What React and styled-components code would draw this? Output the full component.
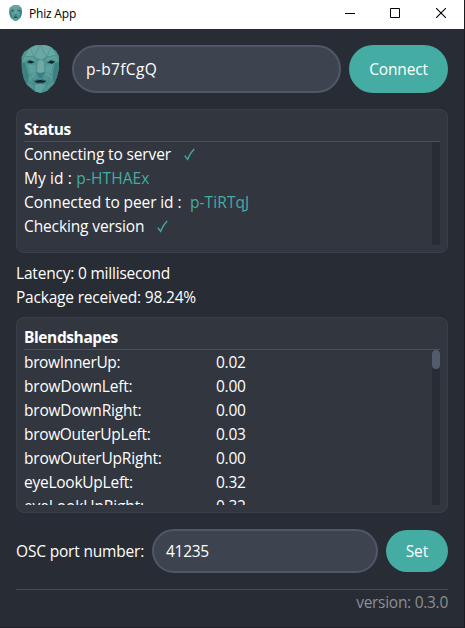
import React from "react";
import styled, { createGlobalStyle } from "styled-components";

const Global = createGlobalStyle`
  *, *::before, *::after { box-sizing: border-box; }
  body {
    margin: 0;
    background: #282c34;
    color: #fff;
    font: 400 15.5px/24px "Open Sans", "Noto Sans", sans-serif;
    overflow: hidden;
  }
`;

const Window = styled.div`
  width: 465px;
  height: 628px;
  display: flex;
  flex-direction: column;
  background: #282c34;
  border-right: 1px solid #1b1c22;
  border-bottom: 1px solid #1e2027;
`;

const TitleBar = styled.header`
  height: 29px;
  flex: none;
  display: flex;
  align-items: center;
  padding: 0 18px 3px 9px;
  background: #fff;
  color: #000;
`;

const AppName = styled.span`
  flex: 1;
  margin-left: 7px;
  font-size: 12px;
  letter-spacing: -0.2px;
  line-height: 16px;
  padding-top: 2px;
`;

const Controls = styled.div`
  display: flex;
  gap: 35px;
  svg { display: block; }
  svg:last-child { margin-left: 1px; }
`;

const Body = styled.main`
  flex: 1;
  display: flex;
  flex-direction: column;
  padding: 16px 16px 0;
`;

const ConnectRow = styled.div`
  display: flex;
  align-items: center;
  gap: 8px;
`;

const LogoBox = styled.div`
  width: 48px;
  height: 48px;
  display: flex;
  justify-content: center;
  svg { display: block; }
`;

const Input = styled.input`
  flex: 1;
  min-width: 0;
  height: ${(p) => p.$height}px;
  padding: 0 12px;
  border: 2px solid #4f586a;
  border-radius: 24px;
  background: #3e444f;
  color: #fff;
  font: inherit;
  letter-spacing: ${(p) => p.$track || 0}px;
  outline: none;
`;

const Button = styled.button`
  width: ${(p) => p.$width}px;
  height: ${(p) => p.$height}px;
  padding: 0;
  border: 0;
  border-radius: 24px;
  background: #44aca2;
  color: #fff;
  font: inherit;
  letter-spacing: ${(p) => p.$track || 0}px;
`;

const Card = styled.section`
  height: ${(p) => p.$height}px;
  display: flex;
  flex-direction: column;
  padding: 7px;
  border: 1px solid #3b3f4a;
  border-radius: 8px;
  background: #32363f;
  margin-top: ${(p) => p.$top}px;
`;

const CardTitle = styled.h2`
  flex: none;
  height: 25px;
  margin: 0;
  border-bottom: 1px solid #4b505c;
  font-size: 15.5px;
  font-weight: 700;
  line-height: 25px;
  letter-spacing: -0.4px;
`;

const Scroller = styled.div`
  flex: 1;
  min-height: 0;
  display: flex;
`;

const Lines = styled.div`
  flex: 1;
  overflow: hidden;
`;

const Track = styled.div`
  width: 8px;
  background: #282c34;
`;

const Thumb = styled.div`
  height: 19px;
  border-radius: 4px;
  background: #535b6c;
`;

const Line = styled.div`
  height: 24px;
  display: flex;
  align-items: center;
  white-space: pre;
`;

const Label = styled.span`
  width: ${(p) => (p.$width ? `${p.$width}px` : "auto")};
  letter-spacing: ${(p) => p.$track || 0}px;
  white-space: pre;
`;

const PeerId = styled(Label)`
  color: #44aca2;
  margin-left: ${(p) => p.$gap}px;
`;

const Check = styled.svg`
  display: block;
  margin-left: 13px;
`;

const Stats = styled.div`
  margin-top: 8px;
`;

const PortRow = styled.div`
  display: flex;
  align-items: center;
  gap: 8px;
  margin-top: 16px;
`;

const Footer = styled.footer`
  margin-top: 16px;
  border-top: 1px solid #474b57;
  text-align: right;
  line-height: 25px;
  color: #8d8f94;
`;

function Mask({ width, height }) {
  return (
    <svg width={width} height={height} viewBox="0 0 38 48">
      <path fill="#519592" d="M9 3 14 .5 19 0 25 .3 30 2 35 6 38 11 38 23 36 32 33 39 26 46 20 48 14 46.5 6 40 3 34 1 26 .5 12 3 7Z" />
      <path fill="#68a9a5" d="M9 3 14 .5 19 0 25 .3 30 2 35 10 26 12 20 15 13 12 4 11Z" />
      <path fill="#5c9f9b" d="M4 11 13 12 16 17 8 14 1 18ZM35 10 26 12 23 17 31 14 38 18Z" />
      <path fill="#3d8080" d="M.5 17 4 18 8 31 6 40 3 34 1 26ZM38 17 34 18 31 30 33 39 36 32 38 23Z" />
      <path fill="#5ca19d" d="M6 20 14 20 15 29 9 36ZM25 20 33 19 31 34 24 29Z" />
      <path fill="#70aaa5" d="M17 16 20 15 23 16 23 27 20 29 16 27Z" />
      <path fill="#3a7f84" d="M15 27 19 28 24 27 21 33 18 33Z" />
      <path fill="#458886" d="M5 16 8 15 13 16 14 18.5 10 18.4 6 19ZM25 17 29 15 34 15.6 34 18 30 19 26 18.6Z" />
      <path fill="#15232b" d="M6 17 9 15.4 13.4 17 10 18.6ZM26.6 17.4 30 15.4 34 16.8 31 18.8Z" />
      <path fill="#3c7d7d" d="M12 36 17 33.5 19 34.5 21 33.5 26 36 23 39 15 39Z" />
      <path fill="#15232b" d="M13.5 36 19 35 25.5 36 22 37.8 16 37.8Z" />
      <path fill="#5da39f" d="M14 40 20 39 25 40 20 48 14 46.5Z" />
      <path
        fill="none"
        stroke="#3c8080"
        strokeWidth=".45"
        d="M9 3 13 12 19 0 26 12 30 2M4 11 13 12 20 15 26 12 35 10M1 18 8 31 15 27M38 18 31 30 24 27M6 20 12 36 14 46M33 19 27 37 20 48M3 34 14 40M36 32 25 40M13 12 17 17M26 12 22 17"
      />
    </svg>
  );
}

function Tick() {
  return (
    <Check width="11" height="13" viewBox="0 0 11 13">
      <path d="M.8 7.6 3.5 11.4C5 7.5 7.2 3.8 10.2.9" fill="none" stroke="#44aca2" strokeWidth="1.4" />
    </Check>
  );
}

const SHAPES = [
  ["browInnerUp:", "0.02", -0.35],
  ["browDownLeft:", "0.00", -0.18],
  ["browDownRight:", "0.00", -0.2],
  ["browOuterUpLeft:", "0.03", -0.33],
  ["browOuterUpRight:", "0.00", -0.2],
  ["eyeLookUpLeft:", "0.32", -0.25],
  ["eyeLookUpRight:", "0.32", -0.12],
];

export default function App() {
  return (
    <>
      <Global />
      <Window>
        <TitleBar>
          <Mask width={13} height={16} />
          <AppName>Phiz App</AppName>
          <Controls>
            <svg width="10" height="10"><path d="M0 5.5H10" stroke="#000" /></svg>
            <svg width="10" height="10"><path d="M.5.5H9.5V9.5H.5Z" fill="none" stroke="#000" /></svg>
            <svg width="10" height="10"><path d="M0 0 10 10M10 0 0 10" stroke="#000" strokeWidth="1.1" /></svg>
          </Controls>
        </TitleBar>
        <Body>
          <ConnectRow>
            <LogoBox><Mask width={38} height={48} /></LogoBox>
            <Input $height={48} $track={0.35} defaultValue="p-b7fCgQ" aria-label="Peer id" />
            <Button $width={99} $height={48} $track={-0.15}>Connect</Button>
          </ConnectRow>
          <Card $height={144} $top={16}>
            <CardTitle>Status</CardTitle>
            <Scroller>
              <Lines>
                <Line><Label $track={-0.14}>Connecting to server</Label><Tick /></Line>
                <Line><Label $track={0.08}>My id :</Label><PeerId $gap={4.5} $track={0.1}>p-HTHAEx</PeerId></Line>
                <Line><Label $track={-0.1}>Connected to peer id :</Label><PeerId $gap={8.5} $track={0.1}>p-TiRTqJ</PeerId></Line>
                <Line><Label $track={-0.12}>Checking version</Label><Tick /></Line>
              </Lines>
              <Track />
            </Scroller>
          </Card>
          <Stats>
            <Line><Label $track={-0.2}>Latency: 0 millisecond</Label></Line>
            <Line><Label $track={-0.2}>Package received: 98.24%</Label></Line>
          </Stats>
          <Card $height={196} $top={8}>
            <CardTitle>Blendshapes</CardTitle>
            <Scroller>
              <Lines>
                {SHAPES.map(([name, value, track]) => (
                  <Line key={name}>
                    <Label $width={192} $track={track}>{name}</Label>
                    <Label $track={-0.25}>{value}</Label>
                  </Line>
                ))}
              </Lines>
              <Track><Thumb /></Track>
            </Scroller>
          </Card>
          <PortRow>
            <Label $width={128} $track={-0.18}>OSC port number:</Label>
            <Input $height={44} $track={-0.3} defaultValue="41235" aria-label="OSC port number" />
            <Button $width={62} $height={42}>Set</Button>
          </PortRow>
          <Footer><Label $track={-0.28}>version: 0.3.0</Label></Footer>
        </Body>
      </Window>
    </>
  );
}
